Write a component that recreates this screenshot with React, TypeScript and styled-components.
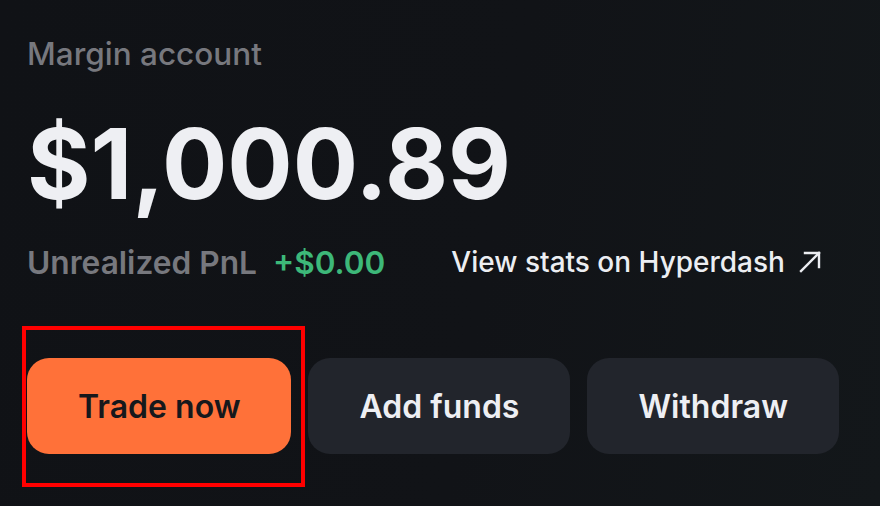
import React from "react";
import styled, { createGlobalStyle } from "styled-components";

const Global = createGlobalStyle`
  html, body { margin: 0; padding: 0; }
  body {
    width: 880px;
    height: 506px;
    overflow: hidden;
    background: #111317;
    font-family: Inter, "Noto Sans", sans-serif;
  }
`;

const Page = styled.div`
  position: relative;
  box-sizing: border-box;
  width: 880px;
  height: 506px;
  padding: 34px 0 0 27px;
  background: linear-gradient(100deg, #101216 0%, #111317 55%, #13171a 100%);
  display: flex;
  flex-direction: column;
`;

const Label = styled.div`
  font-size: 31.5px;
  font-weight: 450;
  color: #77787e;
  line-height: 40px;
`;

const Balance = styled.div`
  margin-top: 40px;
  font-size: 97px;
  font-weight: 700;
  color: #eeeff3;
  line-height: 100px;
`;

const StatsRow = styled.div`
  margin-top: 28px;
  display: flex;
  align-items: center;
  height: 40px;
`;

const PnlLabel = styled.span`
  font-size: 31.7px;
  font-weight: 600;
  color: #77787e;
`;

const PnlValue = styled.span`
  margin-left: 16px;
  font-size: 31.5px;
  font-weight: 600;
  color: #3db879;
`;

const StatsLink = styled.a`
  margin-left: 66px;
  display: flex;
  align-items: center;
  gap: 13px;
  font-size: 28px;
  font-weight: 500;
  color: #eceef2;
  text-decoration: none;
`;

const Actions = styled.div`
  margin-top: 76px;
  display: flex;
  gap: 17px;
`;

const Button = styled.button<{ $primary?: boolean }>`
  height: 96px;
  padding: 0 51px;
  border: none;
  border-radius: 22px;
  font-family: Inter, "Noto Sans", sans-serif;
  font-size: 32px;
  font-weight: 600;
  background: ${(p) => (p.$primary ? "#ff7139" : "#22252c")};
  color: ${(p) => (p.$primary ? "#16181c" : "#eeeff3")};
`;

const Highlight = styled.div`
  position: absolute;
  left: 22px;
  top: 326px;
  width: 283px;
  height: 161px;
  box-sizing: border-box;
  border: 4px solid #ff0000;
  pointer-events: none;
`;

const ArrowIcon = () => (
  <svg width="24" height="24" viewBox="0 0 24 24" fill="none" stroke="#eceef2" strokeWidth="2.4" strokeLinecap="square">
    <path d="M3 21L21 3" />
    <path d="M7 3H21V17" />
  </svg>
);

export default function App() {
  return (
    <>
      <Global />
      <Page>
        <Label>Margin account</Label>
        <Balance>$1,000.89</Balance>
        <StatsRow>
          <PnlLabel>Unrealized PnL</PnlLabel>
          <PnlValue>+$0.00</PnlValue>
          <StatsLink href="#">
            View stats on Hyperdash
            <ArrowIcon />
          </StatsLink>
        </StatsRow>
        <Actions>
          <Button $primary>Trade now</Button>
          <Button>Add funds</Button>
          <Button>Withdraw</Button>
        </Actions>
        <Highlight />
      </Page>
    </>
  );
}
